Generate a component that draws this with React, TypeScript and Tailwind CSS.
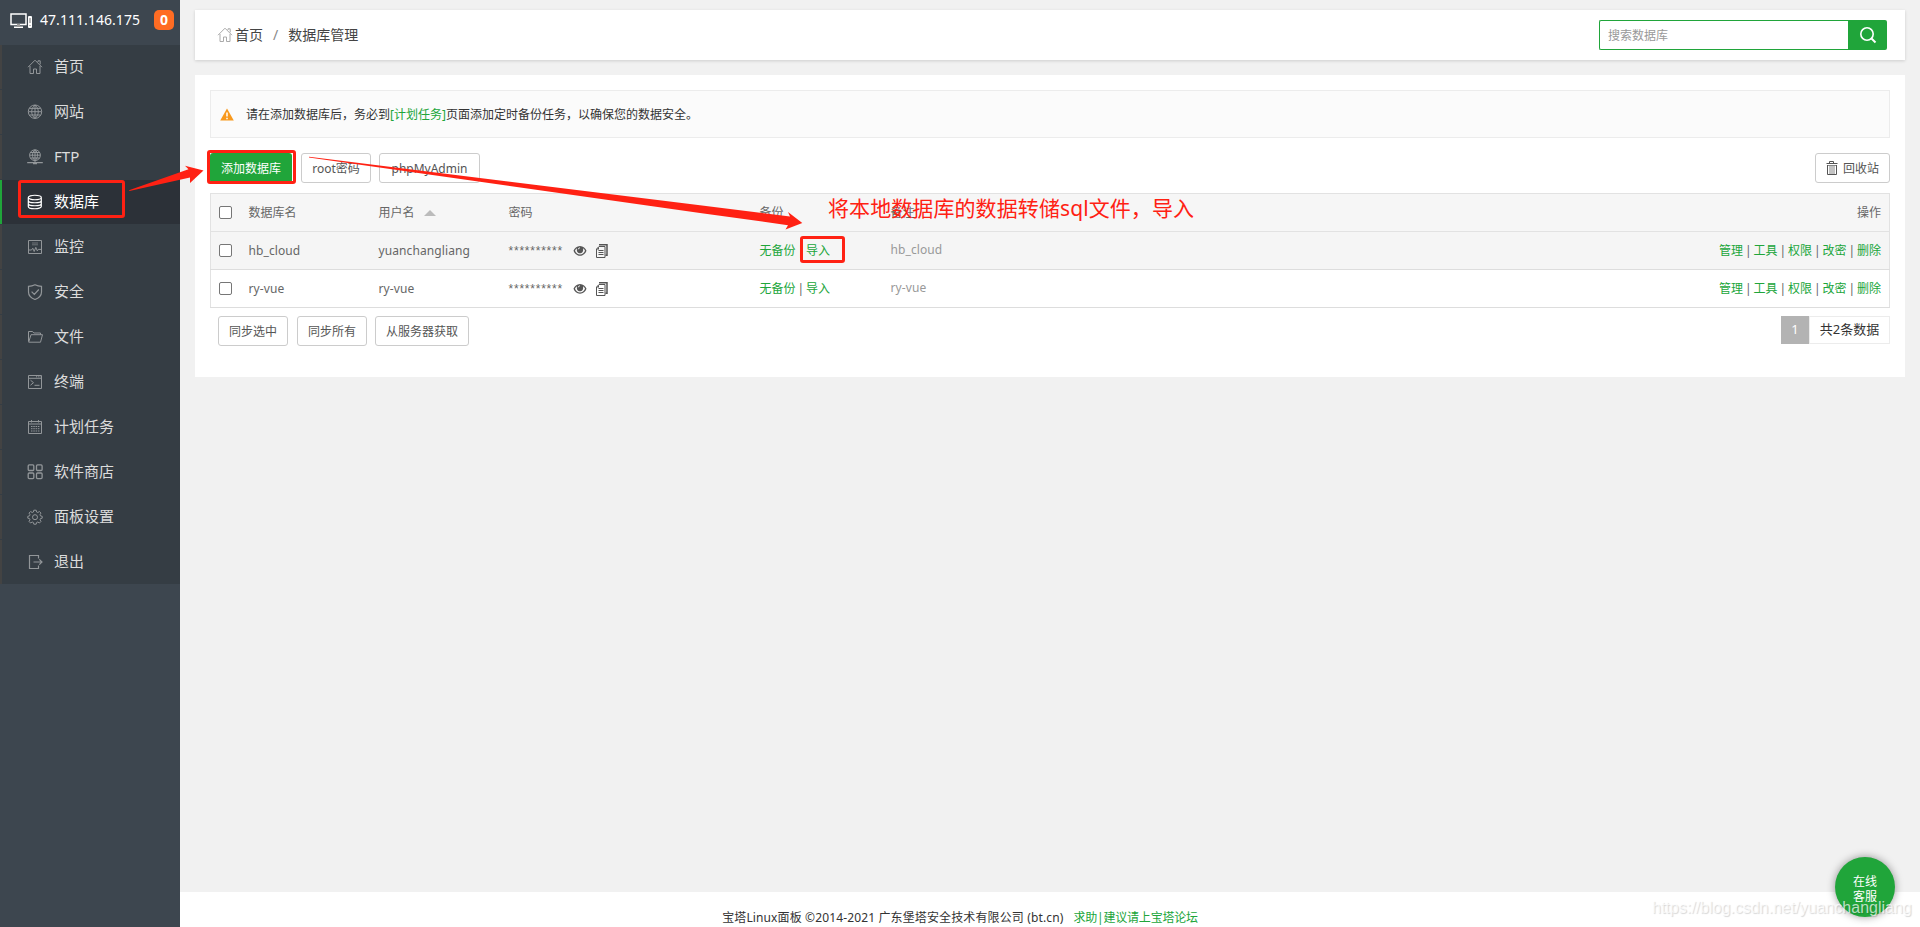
import { ReactNode } from "react";

type IconProps = {
  children: ReactNode;
  className?: string;
};

const Icon = ({ children, className = "size-4" }: IconProps) => (
  <svg
    viewBox="0 0 16 16"
    fill="none"
    stroke="currentColor"
    strokeWidth="1"
    className={`shrink-0 ${className}`}
  >
    {children}
  </svg>
);

const homePath = (
  <path d="M1 8.2 8 1.2l7 7M3 7v7.5h3.5V10h3v4.5H13V7M11 3V1.8h2.2v3.6" />
);

const menus: { name: string; icon: ReactNode; active?: boolean }[] = [
  { name: "首页", icon: homePath },
  {
    name: "网站",
    icon: (
      <path d="M8 1a6.7 6.7 0 1 0 0 13.4A6.7 6.7 0 0 0 8 1zM8 1v13.4M1.5 7.7h13M2.4 4.4h11.2M2.4 11h11.2M8 1c-4.4 3.6-4.4 9.8 0 13.4M8 1c4.4 3.6 4.4 9.8 0 13.4" />
    ),
  },
  {
    name: "FTP",
    icon: (
      <>
        <path d="M8 .8a5.4 5.4 0 1 0 0 10.8A5.4 5.4 0 0 0 8 .8zM8 .8v12.4M2.6 6.2h10.8M3.4 3.5h9.2M3.4 9h9.2M8 .8c-3.4 3-3.4 7.8 0 10.8M8 .8c3.4 3 3.4 7.8 0 10.8" />
        <path d="M.2 13.6h15.6M6 14.6h4" strokeWidth="1.4" />
      </>
    ),
  },
  {
    name: "数据库",
    active: true,
    icon: (
      <path
        strokeWidth="1.2"
        d="M1.3 3.5C1.3.5 14.3.5 14.3 3.5s-13 3-13 0v9c0 3 13 3 13 0v-9M1.3 6.5c0 3 13 3 13 0M1.3 9.5c0 3 13 3 13 0"
      />
    ),
  },
  {
    name: "监控",
    icon: (
      <>
        <path d="M1.5 1.5h13v13h-13zM2 11h2.5l1.3-1.8 1.4 3.3 1.6-4.2 1.5 3.6 1-1.5H14" />
        <path d="M5 4h6M5 5.8h6" opacity=".6" />
      </>
    ),
  },
  {
    name: "安全",
    icon: (
      <path
        strokeWidth="1.2"
        d="M8 .8c2 1 4.200 1.500 6.500 1.500v5.700c0 3.500-2.500 6-6.500 7.500-4-1.500-6.500-4-6.500-7.500V2.300C3.800 2.300 6 1.800 8 .8zM4.600 7.600l2.700 2.700 4.500-4.800"
      />
    ),
  },
  {
    name: "文件",
    icon: (
      <path d="M1.5 12.500v-10h4l1.300 1.500h6.700v1.800M1.700 13.200 4 5.700h11.500l-2 7.500z" />
    ),
  },
  {
    name: "终端",
    icon: (
      <>
        <path d="M1.500 1.500h13v13h-13zM1.500 4.300h13M3.500 6.200l3 2.500-3 2.500M7.500 11.300h5" />
        <path d="M9 2.800h4.500" strokeDasharray="1 .8" />
      </>
    ),
  },
  {
    name: "计划任务",
    icon: (
      <>
        <path d="M1.500 2.500h13v12h-13zM1.500 5h13M4.500 1v2.500M11.500 1v2.500" />
        <path d="M4 7.500h8.500M4 9.700h8.500M4 12h8.500" strokeDasharray="1.500 .8" />
      </>
    ),
  },
  {
    name: "软件商店",
    icon: (
      <g strokeWidth="1.300">
        <rect x="1.200" y=".9" width="5.600" height="5.600" rx="1" />
        <rect x="9.500" y=".9" width="5.600" height="5.600" rx="1" />
        <rect x="1.200" y="9" width="5.600" height="5.600" rx="1" />
        <rect x="9.500" y="9" width="5.600" height="5.600" rx="1" />
      </g>
    ),
  },
  {
    name: "面板设置",
    icon: (
      <>
        <path d="M6.800 1.200h2.400l.4 1.800 1.200.5 1.600-1 1.600 1.600-1 1.600.5 1.200 1.700.4v1.900l-1.700.4-.5 1.200 1 1.600-1.600 1.600-1.600-1-1.200.5-.4 1.700H6.800l-.4-1.700-1.200-.5-1.600 1L2 12.400l1-1.600-.5-1.200-1.700-.4V7.300l1.700-.4L3 5.700 2 4.100l1.600-1.600 1.600 1 1.200-.5z" />
        <circle cx="8" cy="8.200" r="2.500" />
      </>
    ),
  },
  {
    name: "退出",
    icon: (
      <path
        strokeWidth="1.200"
        d="M11.500 4.500v-3h-9v13h9v-3M6.500 8h8.500M12.300 5.300 15 8l-2.700 2.700"
      />
    ),
  },
];

const databases = [
  { name: "hb_cloud", user: "yuanchangliang", hover: true },
  { name: "ry-vue", user: "ry-vue", hover: false },
];

const actions = ["管理", "工具", "权限", "改密", "删除"];

const Checkbox = () => (
  <input
    type="checkbox"
    className="block size-[13px] appearance-none rounded-[2px] border border-[#767676] bg-white"
  />
);

const Button = ({ children, className = "" }: IconProps) => (
  <button
    className={`flex h-[30px] items-center justify-center rounded-[3px] border border-[#ccc] bg-white pt-0.5 text-xs text-[#555] ${className}`}
  >
    {children}
  </button>
);

const Sidebar = () => (
  <aside className="h-full w-[180px] shrink-0 bg-[#3d464f]">
    <div className="flex h-[45px] items-center pb-[5px] pl-[10px] text-white">
      <svg viewBox="0 0 23 17" className="h-[17px] w-[23px]" fill="none">
        <path
          d="M1 2h15v10.500H1zM4 15.200h9"
          stroke="#fff"
          strokeWidth="1.500"
        />
        <path d="M7 12h3v3H7z" fill="#999" />
        <rect x="18" y="4" width="4" height="12" rx="1" fill="#fff" />
        <path d="M20 6v5M19.500 13.500h1" stroke="#777" />
      </svg>
      <span className="ml-[7px] w-[102px] text-sm tracking-[0.05px]">
        47.111.146.175
      </span>
      <span className="ml-3 flex size-5 items-center justify-center rounded-[5px] bg-[#ff6c23] text-sm font-bold">
        0
      </span>
    </div>
    <ul>
      {menus.map((menu) => (
        <li
          key={menu.name}
          className="border-b border-[#353d44] last:border-b-0"
        >
          <a
            className={`flex h-11 items-center border-l-2 pb-px pl-[25px] text-[15px] ${
              menu.active
                ? "border-[#20a53a] bg-[#2c3138] text-white"
                : "border-[#434343] bg-[#353d44] text-[#dcdcdc]"
            }`}
          >
            <Icon className={`size-4 ${menu.active ? "" : "text-[#929699]"}`}>
              {menu.icon}
            </Icon>
            <span className="ml-[11px]">{menu.name}</span>
          </a>
        </li>
      ))}
    </ul>
  </aside>
);

const TopBar = () => (
  <header className="flex h-[50px] shrink-0 items-center justify-between bg-white pr-[18px] pl-[22px] shadow-[0_1px_3px_rgba(0,0,0,0.15)]">
    <div className="flex items-center text-sm text-[#444]">
      <Icon className="size-4 text-[#aaa]">{homePath}</Icon>
      <span className="ml-0.5">首页</span>
      <span className="mx-[10px] text-[#888]">/</span>
      <span>数据库管理</span>
    </div>
    <div className="flex h-[30px]">
      <input
        type="text"
        placeholder="搜索数据库"
        className="w-[249px] rounded-l-[2px] border border-r-0 border-[#20a53a] px-2 pt-0.5 text-xs outline-none placeholder:text-[#999]"
      />
      <button className="flex w-[39px] items-center justify-center rounded-r-[2px] bg-[#20a53a] text-white">
        <svg viewBox="0 0 18 18" className="size-[18px]" fill="none">
          <circle cx="8" cy="8" r="6.200" stroke="#fff" strokeWidth="1.600" />
          <path d="m12.500 12.500 4 4" stroke="#fff" strokeWidth="2" />
        </svg>
      </button>
    </div>
  </header>
);

const Password = () => (
  <div className="flex items-center">
    <span className="w-[55px] whitespace-nowrap pt-px font-['Liberation_Sans',sans-serif] text-xs leading-4 tracking-[0.77px] text-[#666]">
      **********
    </span>
    <svg viewBox="0 0 14 12" className="ml-[9px] h-3 w-[14px]">
      <path
        fillRule="evenodd"
        fill="#555"
        d="M7 1C3.800 1 1.500 3.300.5 5.800 1.500 8.500 3.800 10.800 7 10.800s5.500-2.300 6.500-5C12.500 3.300 10.200 1 7 1zM2 5.800c.4-1 1.100-1.900 2-2.500-.7 3 .8 5 3 5s3.700-2 3-5c.9.6 1.600 1.500 2 2.500-.9 2.200-2.800 3.700-5 3.700S2.900 8 2 5.800z"
      />
      <path d="M5.300 4.300c.1-.9.7-1.400 1.500-1.500" stroke="#fff" fill="none" />
    </svg>
    <svg
      viewBox="0 0 13 14"
      className="ml-2 h-[14px] w-[13px]"
      fill="none"
      stroke="#555"
    >
      <path d="M4 .8h8v10.500h-1.500" strokeWidth="1.500" />
      <path d="M10 2.500v11H1.500V5L4 2.500zM3.500 6.500h5M3.500 8.500h5M3.500 10.500h5" />
      <path d="M1.500 5.500 4 2.700v2.800z" fill="#555" stroke="none" />
    </svg>
  </div>
);

const DatabaseTable = () => (
  <table className="mt-[10px] w-full table-fixed border-collapse border border-[#e2e2e2] text-xs text-[#666]">
    <colgroup>
      <col className="w-[31px]" />
      <col className="w-[130px]" />
      <col className="w-[130px]" />
      <col className="w-[251px]" />
      <col className="w-[131px]" />
      <col />
      <col className="w-[400px]" />
    </colgroup>
    <thead>
      <tr className="h-[38px] border-b border-[#e2e2e2] bg-[#f6f6f6] text-left">
        <th className="pl-2">
          <Checkbox />
        </th>
        <th className="pl-[7px] font-normal">数据库名</th>
        <th className="pl-[7px] font-normal">
          <div className="flex items-center">
            用户名
            <span className="ml-[9px] border-x-[6px] border-b-[6px] border-x-transparent border-b-[#bbb]" />
          </div>
        </th>
        <th className="pl-[7px] font-normal">密码</th>
        <th className="pl-[7px] font-normal">备份</th>
        <th className="pl-[7px] font-normal">备注</th>
        <th className="pr-2 text-right font-normal">操作</th>
      </tr>
    </thead>
    <tbody>
      {databases.map((db) => (
        <tr
          key={db.name}
          className={`h-[38px] border-b border-[#ddd] ${db.hover ? "bg-[#f5f5f5]" : ""}`}
        >
          <td className="pl-2">
            <Checkbox />
          </td>
          <td className="pl-[7px] tracking-[0.1px]">{db.name}</td>
          <td className="pl-[7px] tracking-[0.1px]">{db.user}</td>
          <td className="pl-[7px]">
            <Password />
          </td>
          <td className="pl-[7px] [word-spacing:-1.2px]">
            <a className="text-[#20a53a]">无备份</a> |{" "}
            <a className="text-[#20a53a]">导入</a>
          </td>
          <td className="pb-0.5 pl-[7px] tracking-[0.1px] text-[#999]">
            {db.name}
          </td>
          <td className="pr-2 text-right [word-spacing:-1.2px]">
            {actions.map((action, i) => (
              <span key={action}>
                {i > 0 && " | "}
                <a className="text-[#20a53a]">{action}</a>
              </span>
            ))}
          </td>
        </tr>
      ))}
    </tbody>
  </table>
);

// Red boxes, arrows and note drawn over the page
const Annotations = () => (
  <svg
    viewBox="0 0 1920 927"
    className="pointer-events-none absolute inset-0 h-[927px] w-[1920px]"
  >
    <g fill="none" stroke="#ff2113" strokeWidth="3">
      <rect x="19.500" y="181.500" width="104" height="35" rx="1.500" />
      <rect x="208.500" y="151.500" width="86" height="31" rx="1.500" />
      <rect x="801.500" y="237.500" width="42" height="24" rx="1.500" />
    </g>
    <g fill="#ff2113">
      <path d="M129 190.300 188.500 169.300 185 165.700 203.500 170.500 190 183 190 177.500 129.500 191z" />
      <path d="M309 156.700 700 205.200 790 216.500 788 212 802.300 223 785.500 229.500 788 225.200 700 213 309 157.500z" />
      <text x="828" y="216" fontSize="21" textLength="366">
        将本地数据库的数据转储sql文件，导入
      </text>
    </g>
  </svg>
);

const App = () => {
  return (
    <div className="relative flex h-[927px] w-[1920px] overflow-hidden bg-[#f1f1f1] font-['Noto_Sans','Noto_Sans_CJK_SC',sans-serif]">
      <Sidebar />

      <div className="flex flex-1 flex-col">
        <main className="flex flex-1 flex-col px-[15px] pt-[10px]">
          <TopBar />

          <section className="mt-[15px] h-[302px] bg-white p-[15px]">
            <div className="flex h-12 items-center border border-[#ececec] bg-[#fbfbfb] pl-[9px] text-xs text-[#333]">
              <svg viewBox="0 0 14 13" className="h-[13px] w-[14px]">
                <path d="M7 .5 13.800 12.500H.2z" fill="#f8991d" />
                <path d="M7 4.500v4M7 9.800v1.400" stroke="#fff" strokeWidth="1.500" />
              </svg>
              <span className="ml-3 pt-0.5">
                请在添加数据库后，务必到
                <a className="text-[#20a53a]">[计划任务]</a>
                页面添加定时备份任务，以确保您的数据安全。
              </span>
            </div>

            <div className="mt-[15px] flex">
              <button className="h-[30px] w-[82px] rounded-[3px] bg-[#20a53a] pt-0.5 text-xs text-white">
                添加数据库
              </button>
              <Button className="ml-[9px] w-[70px]">root密码</Button>
              <Button className="ml-2 w-[101px]">phpMyAdmin</Button>
              <Button className="ml-auto w-[75px]">
                <svg
                  viewBox="0 0 12 14"
                  className="mr-[5px] mb-0.5 h-[14px] w-3"
                  fill="none"
                  stroke="#555"
                >
                  <path d="M.5 2.500h11M3.500 2.500v-2h4v2M1.500 4v9.500h9V4" />
                  <path d="M1 4.500h10M4 5v8M6 5v8M8 5v8" strokeWidth=".7" />
                </svg>
                回收站
              </Button>
            </div>

            <DatabaseTable />

            <div className="mt-2 flex items-start pl-2">
              <Button className="w-[70px]">同步选中</Button>
              <Button className="ml-[9px] w-[70px]">同步所有</Button>
              <Button className="ml-2 w-[94px]">从服务器获取</Button>
              <div className="ml-auto flex h-7 items-center text-[13px] text-[#333]">
                <span className="flex h-full w-7 items-center justify-center bg-[#b3b3b3] text-white">
                  1
                </span>
                <span className="flex h-full w-[81px] items-center justify-center border border-[#ececec]">
                  共2条数据
                </span>
              </div>
            </div>
          </section>
        </main>

        <footer className="h-[35px] overflow-hidden bg-white pr-[180px] text-center text-xs leading-[52px] text-[#333]">
          <span className="tracking-[0.13px]">
            宝塔Linux面板 ©2014-2021 广东堡塔安全技术有限公司 (bt.cn)
          </span>
          <a className="ml-[10px] tracking-[-0.2px] text-[#20a53a]">
            求助|建议请上宝塔论坛
          </a>
        </footer>
      </div>

      <div className="absolute top-[857px] left-[1835px] flex size-[60px] flex-col items-center justify-center rounded-full bg-[#20a53a] pt-1 text-xs leading-[15px] text-white shadow-[0_0_8px_rgba(0,0,0,0.4)]">
        <span>在线</span>
        <span>客服</span>
      </div>
      <div className="absolute top-[898px] left-[1652px] font-['Liberation_Sans',sans-serif] text-base leading-5 whitespace-nowrap text-white/70 [text-shadow:1px_1px_1px_rgba(0,0,0,0.16)]">
        https://blog.csdn.net/yuanchangliang
      </div>

      <Annotations />
    </div>
  );
};

export default App;
